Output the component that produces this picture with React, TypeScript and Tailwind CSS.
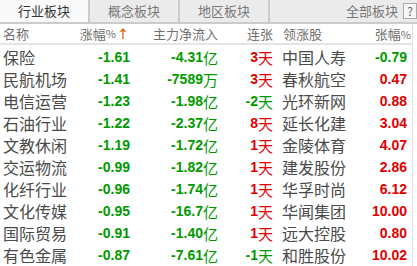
import React from 'react';

type Row = {
  name: string;
  chg: string;
  flow: string;
  unit: string;
  days: number;
  stock: string;
  sChg: string;
};

const rows: Row[] = [
  { name: '保险', chg: '-1.61', flow: '-4.31', unit: '亿', days: 3, stock: '中国人寿', sChg: '-0.79' },
  { name: '民航机场', chg: '-1.41', flow: '-7589', unit: '万', days: 3, stock: '春秋航空', sChg: '0.47' },
  { name: '电信运营', chg: '-1.23', flow: '-1.98', unit: '亿', days: -2, stock: '光环新网', sChg: '0.88' },
  { name: '石油行业', chg: '-1.22', flow: '-2.37', unit: '亿', days: 8, stock: '延长化建', sChg: '3.04' },
  { name: '文教休闲', chg: '-1.19', flow: '-1.72', unit: '亿', days: 1, stock: '金陵体育', sChg: '4.07' },
  { name: '交运物流', chg: '-0.99', flow: '-1.82', unit: '亿', days: 1, stock: '建发股份', sChg: '2.86' },
  { name: '化纤行业', chg: '-0.96', flow: '-1.74', unit: '亿', days: 1, stock: '华孚时尚', sChg: '6.12' },
  { name: '文化传媒', chg: '-0.95', flow: '-16.7', unit: '亿', days: 1, stock: '华闻集团', sChg: '10.00' },
  { name: '国际贸易', chg: '-0.91', flow: '-1.40', unit: '亿', days: 1, stock: '远大控股', sChg: '0.80' },
  { name: '有色金属', chg: '-0.87', flow: '-7.61', unit: '亿', days: -1, stock: '和胜股份', sChg: '10.02' },
];

const cjk = { fontFamily: '"Noto Sans CJK SC", sans-serif' };
const num = { fontFamily: '"Liberation Sans", Arial, sans-serif' };

const green = 'text-[#009a00]';
const red = 'text-[#e00000]';

function Tab({ label, active }: { label: string; active?: boolean }) {
  return (
    <div
      className={
        'flex h-full w-[90px] items-center justify-center border-r-2 border-[#cbcbcb] text-[13px] ' +
        (active ? 'bg-[#f9f9f9] text-[#333]' : 'bg-[#ebebeb] text-[#777]')
      }
    >
      {label}
    </div>
  );
}

export default function App() {
  return (
    <div className="h-[266px] w-[417px] overflow-hidden bg-white" style={cjk}>
      {/* tabs */}
      <div className="flex h-[24px] border-b-2 border-[#cbcbcb] bg-[#ebebeb]">
        <Tab label="行业板块" active />
        <Tab label="概念板块" />
        <Tab label="地区板块" />
        <div className="flex flex-1 items-center justify-end gap-[5px] text-[13px] text-[#777]">
          <span>全部板块</span>
          <span className="flex h-[16px] w-[14px] items-center justify-center border border-[#aaa] bg-[#f6f6f6] text-[12px] leading-none text-[#666]">
            ?
          </span>
        </div>
      </div>

      <div className="mr-[4px] border-r border-[#e2e2e2]">
        {/* header */}
        <div className="flex h-[21px] items-center whitespace-nowrap border-b-2 border-[#e4e4e4] text-[13px] text-[#707070]">
          <div className="w-[80px] pl-[3px]">名称</div>
          <div className="flex w-[49px] items-center justify-end">
            涨幅<span className="text-[11px]">%</span>
            <span className="ml-[1px] text-[12px] font-bold text-[#e06000]">↑</span>
          </div>
          <div className="w-[89px] text-right">主力净流入</div>
          <div className="w-[55px] text-right">连张</div>
          <div className="w-[60px] pl-[10px]">领涨股</div>
          <div className="flex-1 pr-[1px] text-right">
            张幅<span className="text-[11px]">%</span>
          </div>
        </div>

        {/* rows */}
        <div className="pt-[1px]">
          {rows.map((r) => (
            <div key={r.name} className="flex h-[22px] items-center whitespace-nowrap">
              <div className="w-[87px] pl-[3px] text-[16px] leading-none text-[#4a4a4a]">{r.name}</div>
              <div className={'w-[43px] text-right text-[14px] font-bold ' + green} style={num}>
                {r.chg}
              </div>
              <div className={'flex w-[88px] items-center justify-end ' + green}>
                <span className="text-[14px] font-bold" style={num}>
                  {r.flow}
                </span>
                <span className="text-[15px] leading-none">{r.unit}</span>
              </div>
              <div
                className={'flex w-[55px] items-center justify-end ' + (r.days > 0 ? red : green)}
              >
                <span className="text-[14px] font-bold" style={num}>
                  {r.days}
                </span>
                <span className="text-[15px] leading-none">天</span>
              </div>
              <div className="w-[80px] pl-[9px] text-[16px] leading-none text-[#4a4a4a]">{r.stock}</div>
              <div
                className={
                  'flex-1 pr-[5px] text-right text-[14px] font-bold ' +
                  (r.sChg.startsWith('-') ? green : red)
                }
                style={num}
              >
                {r.sChg}
              </div>
            </div>
          ))}
        </div>
      </div>
    </div>
  );
}
